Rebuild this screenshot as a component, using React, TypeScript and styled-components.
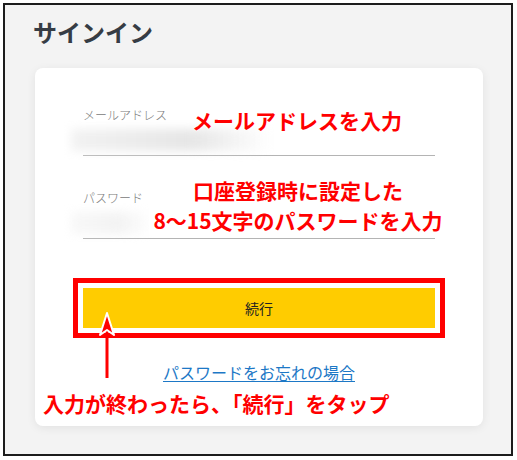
import styled, { createGlobalStyle } from "styled-components";

const GlobalStyle = createGlobalStyle`
  body {
    margin: 0;
    background: #ffffff;
    font-family: "Noto Sans CJK JP", "Noto Sans", sans-serif;
  }
`;

const Frame = styled.div`
  box-sizing: border-box;
  margin: 3px 0 0 3px;
  width: 510px;
  height: 453px;
  border: 2px solid #1c1c1c;
  background: #f3f3f3;
  padding: 10px 28px 0 30px;
  display: flex;
  flex-direction: column;
  gap: 19px;
`;

const Title = styled.h1`
  margin: 0 0 0 -2px;
  font-size: 24px;
  line-height: 34px;
  font-weight: 700;
  color: #363c44;
`;

const Card = styled.div`
  position: relative;
  box-sizing: border-box;
  width: 448px;
  height: 358px;
  background: #ffffff;
  border-radius: 8px;
  box-shadow: 0 2px 10px rgba(0, 0, 0, 0.07);
  padding: 38px 48px 0;
  display: flex;
  flex-direction: column;
`;

const Field = styled.div<{ $gap?: number }>`
  display: flex;
  flex-direction: column;
  margin-top: ${(p) => p.$gap ?? 0}px;
`;

const Label = styled.div`
  font-size: 12px;
  line-height: 18px;
  font-weight: 300;
  color: #7a7a7a;
`;

const Input = styled.div<{ $shade: number; $width: number }>`
  position: relative;
  height: 31px;
  border-bottom: 1px solid #b4b4b4;

  &::before {
    content: "";
    position: absolute;
    left: -12px;
    top: 5px;
    width: ${(p) => p.$width}px;
    height: 22px;
    background: linear-gradient(90deg, #f2f2f2, #e6e6e6 60%, rgba(240, 240, 240, 0));
    opacity: ${(p) => p.$shade};
    filter: blur(5px);
  }
`;

const Button = styled.button`
  display: block;
  width: 100%;
  height: 40px;
  margin-top: 49px;
  border: none;
  border-radius: 0;
  background: #ffcc00;
  color: #222222;
  font-family: inherit;
  font-size: 14px;
  outline: 5px solid #ff0000;
  outline-offset: 5px;
`;

const ForgotLink = styled.a`
  display: block;
  margin-top: 33px;
  text-align: center;
  font-size: 16px;
  line-height: 22px;
  color: #1d78c6;
  text-decoration: underline;
  text-underline-offset: 2px;
`;

const Note = styled.div<{ $left: number; $top: number; $width?: number }>`
  position: absolute;
  left: ${(p) => p.$left}px;
  top: ${(p) => p.$top}px;
  width: ${(p) => (p.$width ? `${p.$width}px` : "auto")};
  font-size: 21px;
  line-height: 30px;
  font-weight: 700;
  color: #ff0000;
  text-align: center;
  white-space: nowrap;
  text-shadow: 0 0 2px #fff, 0 0 2px #fff, 0 0 2px #fff;
`;

const NoteBox = styled(Note)`
  background: #ffffff;
  padding: 0 4px;
`;

const Arrow = styled.svg`
  position: absolute;
  left: 62px;
  top: 242px;
`;

export default function App() {
  return (
    <>
      <GlobalStyle />
      <Frame>
        <Title>サインイン</Title>
        <Card>
          <Field>
            <Label>メールアドレス</Label>
            <Input $shade={1} $width={200} />
          </Field>
          <Field $gap={33}>
            <Label>パスワード</Label>
            <Input $shade={0.5} $width={80} />
          </Field>
          <Button>続行</Button>
          <ForgotLink>パスワードをお忘れの場合</ForgotLink>

          <Note $left={157} $top={37}>
            メールアドレスを入力
          </Note>
          <NoteBox $left={114} $top={107} $width={290}>
            口座登録時に設定した
            <br />
            8〜15文字のパスワードを入力
          </NoteBox>
          <Arrow width="20" height="70" viewBox="0 0 20 70">
            <rect x="8.5" y="18" width="3" height="50" fill="#ff0000" />
            <path
              d="M10 3 L17 25 L10 20 L3 25 Z"
              fill="#ff0000"
              stroke="#ffffff"
              strokeWidth="2"
              strokeLinejoin="round"
            />
          </Arrow>
          <Note $left={8} $top={320}>
            入力が終わったら、「続行」をタップ
          </Note>
        </Card>
      </Frame>
    </>
  );
}
